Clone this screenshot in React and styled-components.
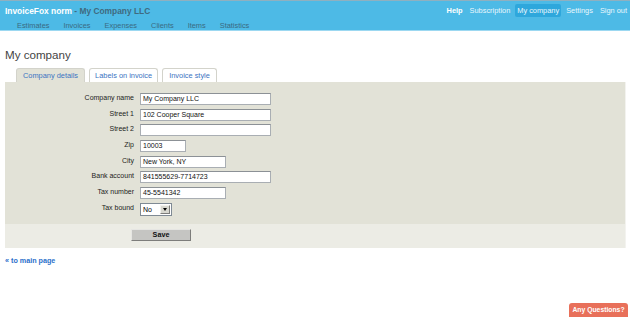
import React from "react";
import styled, { createGlobalStyle } from "styled-components";

const GlobalStyle = createGlobalStyle`
  html, body {
    margin: 0;
    padding: 0;
    background: #fff;
    font-family: "Liberation Sans", Arial, sans-serif;
  }
`;

const Header = styled.header`
  height: 31px;
  background: #4dbae6;
  border-top: 1px solid #8fb0c0;
  border-bottom: 1px solid #9cd8f1;
  box-sizing: border-box;
  display: flex;
  justify-content: space-between;
  padding: 0 3px 0 5px;
`;

const Left = styled.div`
  display: flex;
  flex-direction: column;
`;

const Brand = styled.div`
  font-size: 8.4px;
  font-weight: bold;
  color: #fff;
  padding-top: 5px;
  height: 10px;
  line-height: 10px;

  span {
    color: #3f6a80;
  }
`;

const SubNav = styled.nav`
  display: flex;
  gap: 14px;
  padding: 5px 0 0 12px;
`;

const SubLink = styled.a`
  font-size: 7.4px;
  color: #3a6a82;
  line-height: 10px;
`;

const TopNav = styled.nav`
  display: flex;
  align-items: flex-start;
  gap: 7px;
  padding-top: 3px;
`;

const TopLink = styled.a`
  font-size: 7.4px;
  line-height: 13px;
  color: ${(p) => (p.$bold ? "#fff" : "#eaf7fd")};
  font-weight: ${(p) => (p.$bold ? "bold" : "normal")};
  padding: 0 ${(p) => (p.$active ? "2px" : "0")};
  margin: 0 ${(p) => (p.$active ? "-2px" : "0")};
  border-radius: 2px;
  background: ${(p) => (p.$active ? "#2ea7dc" : "transparent")};
`;

const Page = styled.main`
  padding: 0 4px 0 5px;
`;

const Title = styled.h1`
  margin: 0;
  padding-top: 16px;
  font-size: 11.6px;
  font-weight: normal;
  color: #444;
  line-height: 15px;
`;

const Tabs = styled.div`
  display: flex;
  gap: 4px;
  margin-top: 6px;
  padding-left: 11px;
`;

const Tab = styled.a`
  font-size: 7.4px;
  color: #3b74c2;
  height: 13px;
  line-height: 13px;
  padding: 0 ${(p) => p.$pad}px;
  border: 1px solid #d3d3cb;
  border-bottom: none;
  border-radius: 3px 3px 0 0;
  background: ${(p) => (p.$active ? "#e2e2d7" : "#fff")};
`;

const Panel = styled.section`
  background: #ececE5;
  border-right: 1px solid #f3f3ef;
`;

const FormArea = styled.div`
  background: #e2e2d7;
  padding: 11px 0 9px;
  display: grid;
  grid-template-columns: 129px auto;
  grid-auto-rows: 12px;
  column-gap: 6px;
  row-gap: 3.7px;
`;

const Label = styled.label`
  font-size: 7px;
  color: #222;
  text-align: right;
  line-height: 10px;
`;

const Input = styled.div`
  width: ${(p) => p.$w}px;
  height: 12px;
  box-sizing: border-box;
  background: #fff;
  border: 1px solid #a9aeb3;
  border-top-color: #8c9196;
  font-size: 7px;
  line-height: 10px;
  padding-left: 2px;
  color: #111;
`;

const Select = styled.div`
  width: 32px;
  height: 13px;
  box-sizing: border-box;
  background: #fff;
  border: 1px solid #7f8a94;
  display: flex;
  justify-content: space-between;
  font-size: 7px;
  line-height: 11px;
  padding: 0 1px 0 2px;
`;

const Arrow = styled.span`
  width: 10px;
  height: 9px;
  margin-top: 1px;
  background: #d8d8d0;
  border: 1px solid;
  border-color: #f2f2ee #7d7d7b #7d7d7b #f2f2ee;
  box-sizing: border-box;
  display: flex;
  align-items: center;
  justify-content: center;

  &::after {
    content: "";
    border-left: 2.5px solid transparent;
    border-right: 2.5px solid transparent;
    border-top: 3px solid #000;
  }
`;

const Actions = styled.div`
  padding: 5px 0 7px 126px;
`;

const SaveButton = styled.button`
  display: block;
  width: 60px;
  height: 12px;
  padding: 0;
  font-family: inherit;
  font-size: 7.2px;
  font-weight: bold;
  color: #111;
  background: #c5c5c2;
  border: 1px solid;
  border-color: #e6e6e3 #7d7d7b #7d7d7b #e6e6e3;
  line-height: 10px;
`;

const BackLink = styled.a`
  display: block;
  margin-top: 8px;
  font-size: 7.2px;
  font-weight: bold;
  color: #2b6fca;
  line-height: 10px;
`;

const QuestionsTab = styled.a`
  position: fixed;
  right: 2px;
  bottom: 0;
  width: 59px;
  height: 14px;
  background: #e8705a;
  border-radius: 3px 3px 0 0;
  color: #fff;
  font-size: 6.8px;
  font-weight: bold;
  line-height: 14px;
  text-align: center;
`;

const fields = [
  { label: "Company name", value: "My Company LLC", w: 131 },
  { label: "Street 1", value: "102 Cooper Square", w: 131 },
  { label: "Street 2", value: "", w: 131 },
  { label: "Zip", value: "10003", w: 46 },
  { label: "City", value: "New York, NY", w: 86 },
  { label: "Bank account", value: "841555629-7714723", w: 131 },
  { label: "Tax number", value: "45-5541342", w: 86 },
];

export default function App() {
  return (
    <>
      <GlobalStyle />
      <Header>
        <Left>
          <Brand>
            InvoiceFox norm <span>- My Company LLC</span>
          </Brand>
          <SubNav>
            {["Estimates", "Invoices", "Expenses", "Clients", "Items", "Statistics"].map((t) => (
              <SubLink key={t}>{t}</SubLink>
            ))}
          </SubNav>
        </Left>
        <TopNav>
          <TopLink $bold>Help</TopLink>
          <TopLink>Subscription</TopLink>
          <TopLink $active>My company</TopLink>
          <TopLink>Settings</TopLink>
          <TopLink>Sign out</TopLink>
        </TopNav>
      </Header>
      <Page>
        <Title>My company</Title>
        <Tabs>
          <Tab $active $pad={6}>Company details</Tab>
          <Tab $pad={5}>Labels on invoice</Tab>
          <Tab $pad={6}>Invoice style</Tab>
        </Tabs>
        <Panel>
          <FormArea>
            {fields.map((f) => (
              <React.Fragment key={f.label}>
                <Label>{f.label}</Label>
                <Input $w={f.w}>{f.value}</Input>
              </React.Fragment>
            ))}
            <Label>Tax bound</Label>
            <Select>
              No
              <Arrow />
            </Select>
          </FormArea>
          <Actions>
            <SaveButton>Save</SaveButton>
          </Actions>
        </Panel>
        <BackLink>« to main page</BackLink>
      </Page>
      <QuestionsTab>Any Questions?</QuestionsTab>
    </>
  );
}
